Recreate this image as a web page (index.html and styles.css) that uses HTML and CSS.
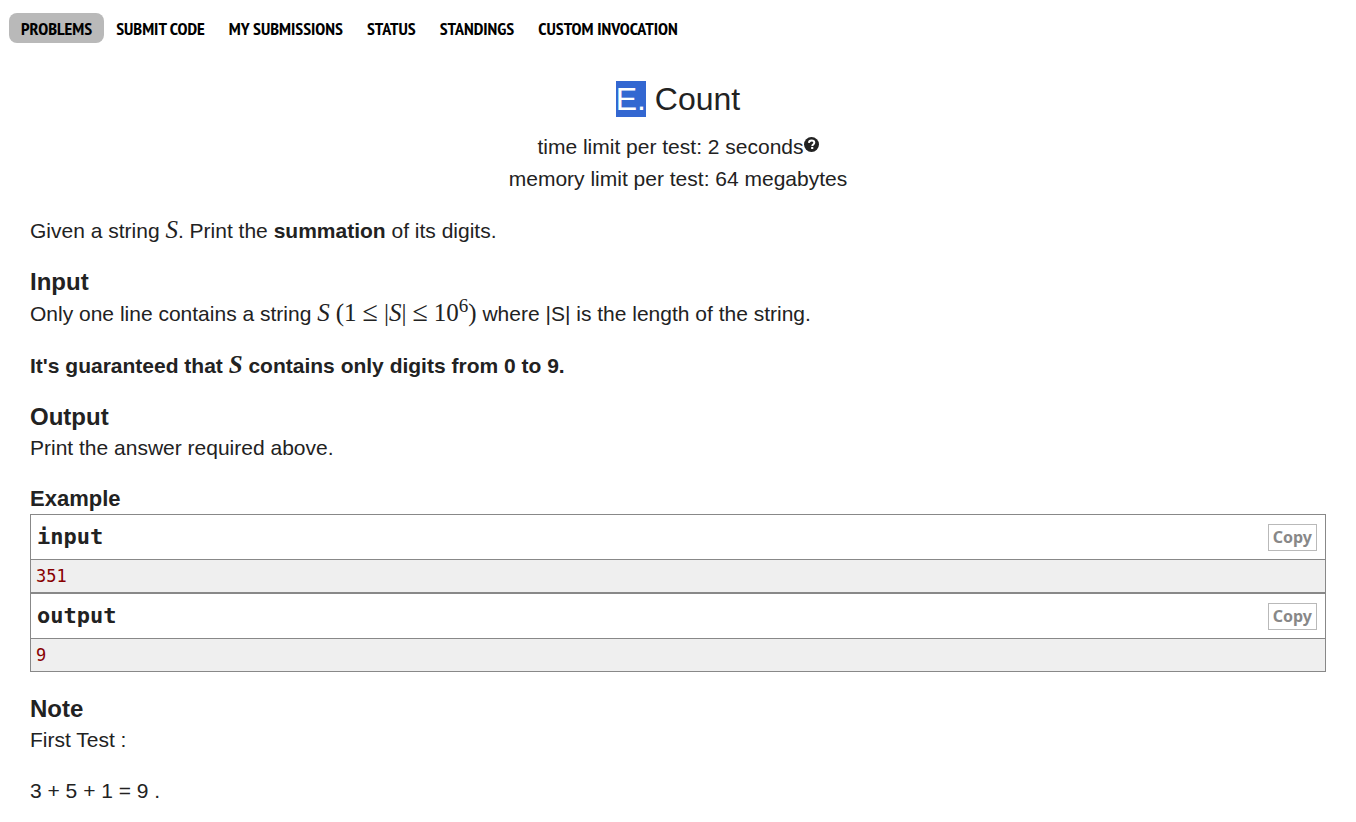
FILE: index.html
```html
<!DOCTYPE html>
<html lang="en">
<head>
<meta charset="utf-8">
<title>E. Count</title>
<link rel="stylesheet" href="styles.css">
</head>
<body>
<nav class="menu">
  <a class="menu-link current" href="#">PROBLEMS</a>
  <a class="menu-link" href="#">SUBMIT CODE</a>
  <a class="menu-link" href="#">MY SUBMISSIONS</a>
  <a class="menu-link" href="#">STATUS</a>
  <a class="menu-link" href="#">STANDINGS</a>
  <a class="menu-link" href="#">CUSTOM INVOCATION</a>
</nav>
<main class="problem">
  <header class="header">
    <h1 class="title"><span class="selected">E.</span> Count</h1>
    <div class="limit">time limit per test: 2 seconds<svg class="help" viewBox="0 0 16 16" role="img" aria-label="Help"><circle cx="8" cy="8" r="8" fill="#222"/><path d="M5.2 6.3C5.3 4.5 6.4 3.7 8.1 3.7c1.8 0 2.9 1 2.9 2.4 0 1.8-2.2 1.9-2.2 3.4" fill="none" stroke="#fff" stroke-width="2.1"/><rect x="7.6" y="10.6" width="2.3" height="2.2" fill="#fff"/></svg></div>
    <div class="limit">memory limit per test: 64 megabytes</div>
  </header>
  <p class="text">Given a string <i class="math">S</i>. Print the <b>summation</b> of its digits.</p>
  <section class="section">
    <h2 class="heading">Input</h2>
    <p class="text formula-line">Only one line contains a string <span class="math formula"><i>S</i><span>(1</span><span class="relation">≤</span><span>|<i>S</i>|</span><span class="relation">≤</span><span>10<sup class="power">6</sup>)</span></span> where |S| is the length of the string.</p>
    <p class="text"><b>It's guaranteed that <i class="math">S</i> contains only digits from 0 to 9.</b></p>
  </section>
  <section class="section">
    <h2 class="heading">Output</h2>
    <p class="text">Print the answer required above.</p>
  </section>
  <section class="section">
    <h2 class="heading example-heading">Example</h2>
    <div class="sample">
      <div class="sample-title">input<button class="copy" type="button">Copy</button></div>
      <pre class="data">351</pre>
    </div>
    <div class="sample">
      <div class="sample-title">output<button class="copy" type="button">Copy</button></div>
      <pre class="data">9</pre>
    </div>
  </section>
  <section class="section">
    <h2 class="heading">Note</h2>
    <p class="text">First Test :</p>
    <p class="text">3 + 5 + 1 = 9 .</p>
  </section>
</main>
</body>
</html>
```
FILE: styles.css
```css
body {
  margin: 0;
  background: #fff;
  color: #222;
  font: 21px/31px "Liberation Sans", Arial, sans-serif;
}
.menu {
  display: flex;
  padding: 13px 9px 0;
}
.menu-link {
  padding: 2px 12px 0;
  border-radius: 8px;
  color: #000;
  font: bold 18px/28px "PT Sans Narrow", "Liberation Sans Narrow", "Roboto Condensed", sans-serif;
  text-decoration: none;
  white-space: nowrap;
}
.current { background: #b9b9b9; }
.problem { padding: 36px 30px 16px; }
.header {
  margin-bottom: 20px;
  text-align: center;
}
.title {
  margin: 0 0 12px;
  font-size: 32px;
  font-weight: normal;
  line-height: 40px;
}
.selected {
  background: #3367d1;
  color: #fff;
}
.limit { line-height: 32px; }
.help {
  width: 15px;
  height: 15px;
  vertical-align: 2px;
}
.text { margin: 0 0 20px; }
.formula-line { line-height: 33px; }
.math {
  font-family: "Liberation Serif", "Times New Roman", serif;
  font-size: 25px;
  line-height: 24px;
}
.formula {
  display: inline-flex;
  gap: 6px;
  align-items: baseline;
}
.relation { font-size: 28px; }
.power {
  font-size: 19px;
  line-height: 1px;
}
.section { margin-top: 21px; }
.heading {
  margin: 0;
  font-size: 24px;
  line-height: 30px;
}
.example-heading { font-size: 22px; }
.sample {
  border: 1px solid #888;
}
.sample-title {
  display: flex;
  align-items: center;
  justify-content: space-between;
  padding: 8px 8px 8px 6px;
  border-bottom: 1px solid #888;
  font: bold 22px/28px "DejaVu Sans Mono", monospace;
}
.copy {
  padding: 0 4px;
  border: 1px solid #b9b9b9;
  background: #fff;
  color: #888;
  font: bold 16px/25px "Noto Sans", "Open Sans", sans-serif;
}
.data {
  margin: 0;
  padding: 0 5px;
  background: #efefef;
  color: #880000;
  font: 17px/32px "DejaVu Sans Mono", monospace;
}
.sample + .sample { margin-bottom: 22px; }
```
